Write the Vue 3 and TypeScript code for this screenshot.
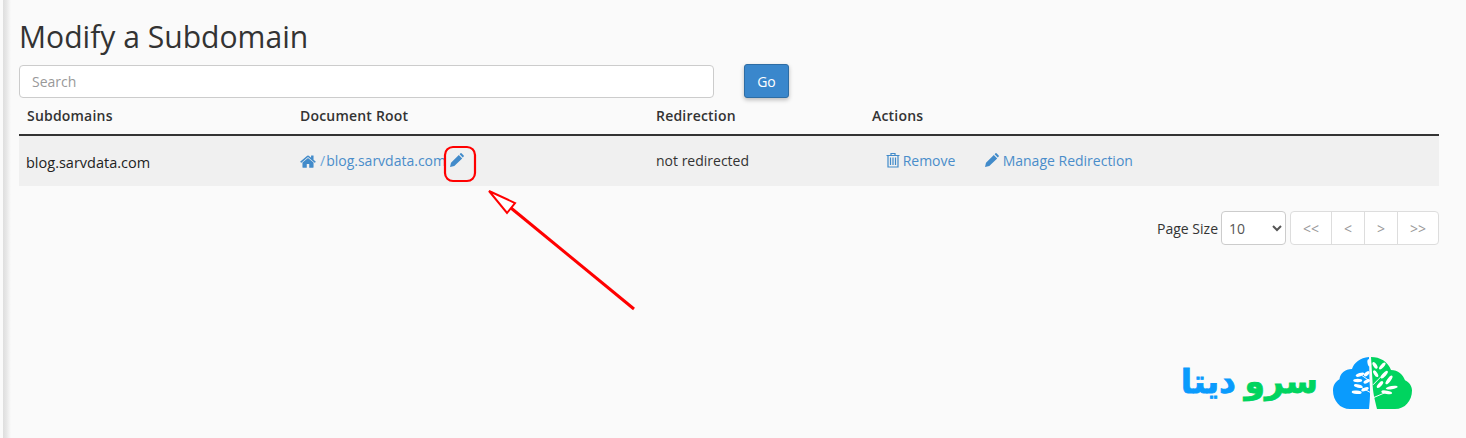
<template>
  <div class="page">
    <h1 class="title">Modify a Subdomain</h1>
    <div class="search-row">
      <input class="search" type="text" placeholder="Search" />
      <button class="go">Go</button>
    </div>

    <table class="domains">
      <thead>
        <tr>
          <th class="col-a">Subdomains</th>
          <th class="col-b">Document Root</th>
          <th class="col-c">Redirection</th>
          <th>Actions</th>
        </tr>
      </thead>
      <tbody>
        <tr>
          <td class="name">blog.sarvdata.com</td>
          <td>
            <span class="link">
              <svg class="ico home" viewBox="0 0 1664 1408"><path :d="homePath" /></svg>
              <span class="slash">/</span>blog.sarvdata.com
            </span>
            <svg class="ico pen-root" viewBox="0 0 14 14"><path :d="pencilPath" /></svg>
          </td>
          <td>not redirected</td>
          <td>
            <span class="link action remove">
              <svg class="trash" viewBox="0 0 14 16">
                <path d="M5 3V1.500h4V3M.5 3.500h13M2 3.500V15h10V3.500M4.500 5.500v7.500M7 5.500v7.500M9.500 5.500v7.500" />
              </svg>
              Remove
            </span>
            <span class="link action">
              <svg class="ico pen" viewBox="0 0 14 14"><path :d="pencilPath" /></svg>
              Manage Redirection
            </span>
          </td>
        </tr>
      </tbody>
    </table>

    <div class="pager-row">
      <span class="size-label">Page Size</span>
      <select class="size">
        <option v-for="n in sizes" :key="n">{{ n }}</option>
      </select>
      <div class="pager">
        <button v-for="p in pages" :key="p">{{ p }}</button>
      </div>
    </div>

    <div class="logo-row">
      <svg class="cloud" viewBox="0 0 79 56" preserveAspectRatio="none">
        <path fill="#0a9bfd" d="M36 0C27 1 21 6 19 13 12 13 7 18 6.500 24 2 27 0 31 0 36c0 11 7 20 17 20h19C37 46 37.500 38 36.500 26z" />
        <path fill="#00d45f" d="M38 0c9 0 17 5 20 14 7 0 12 5 14 11 4 2 7 6 7 11 0 11-7 20-17 20H44C42 46 39.500 38 39.500 26z" />
        <g fill="none" stroke="#fff" stroke-width="1">
          <path d="M37 38 27 32M37 26 29 20M40 44 53 38M40 30 50 19" />
        </g>
        <g fill="#fff">
          <ellipse v-for="(l, i) in leaves" :key="i" :cx="l[0]" :cy="l[1]" :rx="l[2]" ry="1.800" :transform="`rotate(${l[3]} ${l[0]} ${l[1]})`" />
        </g>
      </svg>
      <div class="wordmark" dir="rtl"><span class="green">سرو</span> <span class="blue">دیتا</span></div>
    </div>

    <!-- annotation drawn on top of the screenshot -->
    <svg class="mark" width="1466" height="438" viewBox="0 0 1466 438">
      <rect x="445" y="147" width="30" height="34" rx="8" fill="none" stroke="#f00" stroke-width="2.200" />
      <path d="M634 309 511 208" fill="none" stroke="#f00" stroke-width="3" />
      <path d="M489 191 515 203 507 213z" fill="#fff" stroke="#f00" stroke-width="2" />
    </svg>
  </div>
</template>

<script setup lang="ts">
const sizes = [10, 20, 50, 100]
const pages = ['<<', '<', '>', '>>']

const homePath =
  'M1408 864v480q0 26-19 45t-45 19H960v-384H704v384H320q-26 0-45-19t-19-45V864q0-1 .5-3t.5-3l575-474 575 474q1 2 1 6zm223-69-62 74q-8 9-21 11h-3q-13 0-21-7L832 296 140 873q-12 8-24 7-13-2-21-11l-62-74q-8-10-7-23.500T37 750L756 151q32-26 76-26t76 26l244 204V160q0-14 9-23t23-9h192q14 0 23 9t9 23v408l219 182q10 8 11 21.500t-7 23.500z'
const pencilPath = 'M0 14l1-4.200L8.800 2l3.400 3.400L4.300 13zM9.600 1.200 10.500.3q.5-.4 1 0l2.200 2.200q.4.500 0 1l-.9.9z'

// cx, cy, half length, angle
const leaves: [number, number, number, number][] = [
  [36.3, 6.300, 4, 80], [27, 19, 4.500, -20], [33.700, 18, 3.500, -45], [24.700, 25.300, 4.500, 0],
  [33.700, 26.300, 3.500, -30], [25.300, 31.300, 4.500, 15], [32, 34.700, 4, -25], [23.700, 38, 5, 5],
  [42, 9, 4, 60], [49.300, 9.700, 4.500, -50], [51.300, 19, 5, -50], [42.700, 18, 4, 60],
  [56, 24.700, 5.500, -55], [47, 29.700, 4.500, -50], [58.700, 33, 6, -10], [53.700, 38, 5.500, 10],
]
</script>

<style>
html,
body {
  margin: 0;
  background: #fafafa;
}
</style>

<style scoped>
.page {
  position: relative;
  box-sizing: border-box;
  width: 1466px;
  height: 438px;
  overflow: hidden;
  padding: 0 27px 0 19px;
  background: #fafafa;
  font-family: "Open Sans", sans-serif;
  font-size: 14px;
  color: #333;
}

.page::before {
  content: "";
  position: absolute;
  left: 3px;
  top: 0;
  bottom: 0;
  width: 8px;
  background: linear-gradient(to right, #dedede, #e6e6e6 40%, #fafafa);
}

.title {
  margin: 0;
  padding-top: 16px;
  height: 48px;
  font-size: 30.100px;
  font-weight: 400;
  line-height: 42px;
}

.search-row {
  display: flex;
  align-items: flex-start;
  gap: 30px;
  height: 34px;
}

.search {
  box-sizing: border-box;
  width: 695px;
  height: 33px;
  margin-top: 1px;
  padding: 0 12px;
  background: #fff;
  border: 1px solid #ccc;
  border-radius: 4px;
  font: 14px "Open Sans", sans-serif;
  outline: none;
}

.search::placeholder {
  color: #999;
  opacity: 1;
}

.go {
  box-sizing: border-box;
  width: 45px;
  height: 34px;
  padding: 0;
  background: #3a87cc;
  border: 1px solid #2e6da4;
  border-radius: 3px;
  box-shadow: 0 2px 4px rgba(0, 0, 0, 0.25);
  color: #fff;
  font: 14px "Open Sans", sans-serif;
}

.domains {
  width: 1420px;
  table-layout: fixed;
  border-collapse: separate;
  border-spacing: 0;
}

.domains th {
  box-sizing: border-box;
  height: 38px;
  padding: 8px 8px 0;
  border-bottom: 2px solid #333;
  text-align: left;
  vertical-align: top;
  font-weight: 600;
  letter-spacing: 0.2px;
  line-height: 20px;
}

.col-a {
  width: 273px;
}

.col-b {
  width: 356px;
}

.col-c {
  width: 216px;
}

.domains td {
  box-sizing: border-box;
  height: 50px;
  padding: 0 8px 1px;
  background: #f0f0f0;
  white-space: nowrap;
  line-height: 20px;
}

.domains td.name {
  padding: 3px 7px 0;
  font-size: 14.500px;
  color: #222;
}

.link {
  color: #4a8dca;
}

.slash {
  margin: 0 1px 0 4px;
  color: #6aa5d8;
}

.ico {
  fill: #428bca;
  vertical-align: -1px;
}

.home {
  width: 16px;
  height: 14px;
  vertical-align: -2px;
}

.pen-root {
  width: 14px;
  height: 14px;
}

.pen {
  width: 14px;
  height: 14px;
}

.trash {
  width: 14px;
  height: 16px;
  margin-left: 14px;
  margin-right: -1px;
  vertical-align: -2px;
  fill: none;
  stroke: #428bca;
  stroke-width: 1.200;
}

.remove {
  margin-right: 26px;
}

.pager-row {
  display: flex;
  justify-content: flex-end;
  align-items: center;
  margin-top: 25px;
  height: 34px;
}

.size-label {
  margin-right: 3px;
}

.size {
  box-sizing: border-box;
  width: 65px;
  height: 34px;
  margin-right: 4px;
  padding: 0 0 0 3px;
  background: #fff;
  border: 1px solid #ccc;
  border-radius: 4px;
  color: #555;
  font: 14px "Open Sans", sans-serif;
}

.pager {
  display: flex;
  height: 34px;
}

.pager button {
  box-sizing: border-box;
  width: 34px;
  height: 34px;
  margin-left: -1px;
  padding: 0;
  background: #fff;
  border: 1px solid #ddd;
  color: #999;
  font: 14px "Open Sans", sans-serif;
}

.pager button:first-child {
  width: 42px;
  margin-left: 0;
  border-radius: 4px 0 0 4px;
}

.pager button:last-child {
  width: 42px;
  border-radius: 0 4px 4px 0;
}

.logo-row {
  display: flex;
  flex-direction: row-reverse;
  align-items: center;
  gap: 15px;
  margin-top: 112px;
  margin-right: 27px;
  height: 52px;
}

.cloud {
  display: block;
  width: 79px;
  height: 52px;
}

.wordmark {
  margin-bottom: 3px;
  font-family: "DejaVu Sans", sans-serif;
  font-size: 33px;
  font-weight: 700;
  -webkit-text-stroke: 0.8px currentColor;
  word-spacing: -3px;
  line-height: 50px;
  white-space: nowrap;
}

.green {
  color: #00d45f;
}

.blue {
  color: #0a9bfd;
}

.mark {
  position: absolute;
  left: 0;
  top: 0;
  pointer-events: none;
}
</style>
